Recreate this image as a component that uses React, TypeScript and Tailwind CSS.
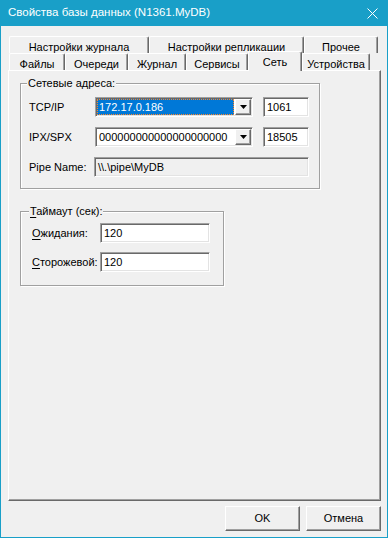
import React from 'react';

const sunken =
  'border border-t-[#a0a0a0] border-l-[#a0a0a0] border-r-white border-b-white shadow-[inset_1px_1px_0_#696969,inset_-1px_-1px_0_#e3e3e3]';
const raised =
  'border border-t-white border-l-white border-r-[#696969] border-b-[#696969] shadow-[inset_-1px_-1px_0_#a0a0a0]';
const etched = 'border border-[#a0a0a0] shadow-[inset_1px_1px_0_#fff,1px_1px_0_#fff]';

const topTabs = [
  { label: 'Настройки журнала', w: 'w-[140px]' },
  { label: 'Настройки репликации', w: 'w-[155px]' },
  { label: 'Прочее', w: 'w-[74px]' },
];

const bottomTabs = [
  { label: 'Файлы', w: 'w-[56px]' },
  { label: 'Очереди', w: 'w-[63px]' },
  { label: 'Журнал', w: 'w-[58px]' },
  { label: 'Сервисы', w: 'w-[62px]' },
  { label: 'Сеть', w: 'w-[54px]', selected: true },
  { label: 'Устройства', w: 'w-[68px]' },
];

const tabBase =
  'flex justify-center rounded-t-[2px] border-l border-t border-r border-l-white border-t-white border-r-[#696969] shadow-[inset_-1px_0_0_#a0a0a0] bg-[#f0f0f0]';

const DropButton: React.FC = () => (
  <div className={`w-[16px] h-full flex items-center justify-center bg-[#f0f0f0] ${raised}`}>
    <svg width="7" height="4" viewBox="0 0 7 4">
      <polygon points="0,0 7,0 3.5,4" fill="#000" />
    </svg>
  </div>
);

const Field: React.FC<{ w: string; value: string; disabled?: boolean }> = ({ w, value, disabled }) => (
  <div className={`${w} h-[20px] p-[1px] pl-[3px] flex items-center ${sunken} ${disabled ? 'bg-[#f0f0f0]' : 'bg-white'}`}>
    <span className="leading-[14px]">{value}</span>
  </div>
);

const Ul: React.FC<{ c: string; rest: string }> = ({ c, rest }) => (
  <span>
    <span className="underline underline-offset-[2px]">{c}</span>
    {rest}
  </span>
);

export default function App() {
  return (
    <div className="w-[388px] h-[538px] flex flex-col bg-[#f0f0f0] border border-t-0 border-[#199fc8] text-[11px] text-black font-['Liberation_Sans',Arial,sans-serif]">
      {/* title bar */}
      <div className="h-[26px] shrink-0 bg-[#199fc8] flex items-center justify-between pl-[7px] pr-[9px] text-white text-[11.5px]">
        <span>Свойства базы данных (N1361.MyDB)</span>
        <svg width="11" height="11" viewBox="0 0 11 11" className="mt-[1px]">
          <path d="M0.5 0.5 L10.5 10.5 M10.5 0.5 L0.5 10.5" stroke="#fff" strokeWidth="1" />
        </svg>
      </div>

      <div className="flex-1 flex flex-col pl-[7px] pr-[6px] pt-[10px]">
        {/* tabs */}
        <div className="flex h-[17px] pl-[1px]">
          {topTabs.map((t) => (
            <div key={t.label} className={`${t.w} h-[17px] pt-[2px] ${tabBase}`}>
              {t.label}
            </div>
          ))}
        </div>
        <div className="flex items-end h-[17px] pl-[1px]">
          {bottomTabs.map((t) =>
            t.selected ? (
              <div
                key={t.label}
                className={`${t.w} h-[20px] pt-[2px] relative z-10 translate-y-[1px] ${tabBase}`}
              >
                {t.label}
              </div>
            ) : (
              <div key={t.label} className={`${t.w} h-[17px] pt-[2px] ${tabBase}`}>
                {t.label}
              </div>
            )
          )}
        </div>

        {/* panel */}
        <div className="flex-1 border border-t-white border-l-white border-r-[#696969] border-b-[#696969] shadow-[inset_-1px_-1px_0_#a0a0a0] pl-[11px] pt-[12px]">
          <div className={`w-[300px] h-[106px] ${etched}`}>
            <div className="-mt-[7px] ml-[6px] w-fit px-[1px] bg-[#f0f0f0] leading-[13px]">Сетевые адреса:</div>
            <div className="mt-[7px] flex flex-col gap-[10px] pl-[8px]">
              <div className="flex items-center h-[20px]">
                <span className="w-[66px]">TCP/IP</span>
                <div className={`w-[158px] h-[20px] p-[1px] flex bg-white ${sunken}`}>
                  <div className="flex-1 mr-[1px] flex items-center pl-[1px] bg-[#0078d7] text-white border border-dotted border-[#ff8728]">
                    172.17.0.186
                  </div>
                  <DropButton />
                </div>
                <Field w="w-[46px] ml-[10px]" value="1061" />
              </div>
              <div className="flex items-center h-[20px]">
                <span className="w-[66px]">IPX/SPX</span>
                <div className={`w-[158px] h-[20px] p-[1px] flex bg-white ${sunken}`}>
                  <div className="flex-1 mr-[1px] flex items-center pl-[2px] overflow-hidden whitespace-nowrap">
                    000000000000000000000
                  </div>
                  <DropButton />
                </div>
                <Field w="w-[46px] ml-[10px]" value="18505" />
              </div>
              <div className="flex items-center h-[20px]">
                <span className="w-[65px]">Pipe Name:</span>
                <Field w="w-[215px]" value="\\.\pipe\MyDB" disabled />
              </div>
            </div>
          </div>

          <div className={`mt-[22px] w-[204px] h-[75px] ${etched}`}>
            <div className="-mt-[7px] ml-[8px] w-fit px-[1px] bg-[#f0f0f0] leading-[13px]">
              <Ul c="Т" rest="аймаут (сек):" />
            </div>
            <div className="mt-[5px] flex flex-col gap-[9px] pl-[11px]">
              <div className="flex items-center h-[20px]">
                <span className="w-[68px]">
                  <Ul c="О" rest="жидания:" />
                </span>
                <Field w="w-[110px]" value="120" />
              </div>
              <div className="flex items-center h-[20px]">
                <span className="w-[68px]">
                  <Ul c="С" rest="торожевой:" />
                </span>
                <Field w="w-[110px]" value="120" />
              </div>
            </div>
          </div>
        </div>

        {/* buttons */}
        <div className="flex justify-end gap-[6px] pt-[5px] pb-[6px]">
          <button className={`w-[75px] h-[25px] bg-[#f0f0f0] ${raised}`}>OK</button>
          <button className={`w-[75px] h-[25px] bg-[#f0f0f0] ${raised}`}>Отмена</button>
        </div>
      </div>
    </div>
  );
}
